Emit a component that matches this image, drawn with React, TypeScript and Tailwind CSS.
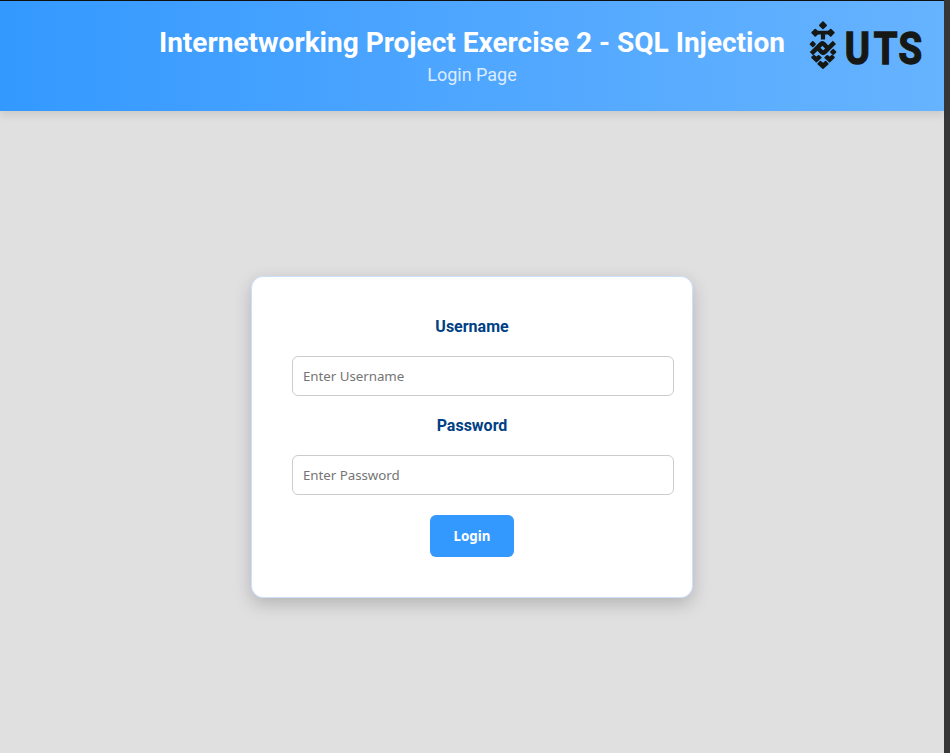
function UtsLogo() {
  return (
    <svg viewBox="0 0 114 60" className="block h-[60px] w-[114px] overflow-visible" fill="#161815" role="img" aria-label="UTS">
      <g stroke="#161815" strokeWidth="1.8" strokeLinejoin="round">
        <path d="M14 1.2l3.1 3.1L14 7.4l-3.1-3.1z" />
        <path d="M6.3 8.6l3.1 3.1-3.1 3.1-3.1-3.1zM21.7 8.6l3.1 3.1-3.1 3.1-3.1-3.1z" />
        <path d="M3.8 21l2.2 2.2-2.2 2.2-2.2-2.2zM24.2 28.8l2.2 2.2-2.2 2.2-2.2-2.2z" />
      </g>
      <path d="M6 9.8h16v3.8h-5.9V18.4h-4.2v-4.8H6z" />
      <g fill="none" stroke="#161815" strokeWidth="4.5" strokeLinejoin="round">
        <path d="M2.4 32.6L12.2 22.9Q13.4 21.9 14.6 22.9L18.2 26.5" />
        <path d="M9.6 28L13 31.3Q14.2 32.3 15.4 31.3L25.4 21.4" />
      </g>
      <g stroke="#161815" strokeWidth="1.7" strokeLinejoin="round">
        <path d="M3 36.4L5 34.6L7.4 36.6L9.8 34.8L11.8 36.6L7.4 40.6z" />
        <path d="M25 36.4L23 34.6L20.6 36.6L18.2 34.8L16.2 36.6L20.6 40.6z" />
        <path d="M9.2 42.8L11.4 40.7L14 42.9L16.6 40.7L18.8 42.8L14 47z" />
      </g>
      <text
        transform="scale(0.87 1)"
        x="41 74.4 102.8"
        y="42.6"
        fontFamily="Roboto, sans-serif"
        fontWeight="700"
        fontSize="44"
        stroke="#161815"
        strokeWidth="1.4"
      >
        UTS
      </text>
    </svg>
  );
}

function Field({ label, type, placeholder }: { label: string; type: string; placeholder: string }) {
  return (
    <label className="mb-5 block text-center">
      <span className="block h-[19px] text-base leading-[19px] font-bold text-[#004085]">{label}</span>
      <input
        type={type}
        placeholder={placeholder}
        className="mt-5 block h-10 w-[382px] rounded-[6px] border border-[#ccc] bg-white px-2.5 font-['Noto_Sans',sans-serif] text-[13.333px] tracking-[-0.04px] placeholder:text-[#757575]"
      />
    </label>
  );
}

export default function App() {
  return (
    <div className="flex h-[753px] w-[950px] overflow-hidden bg-[#383838] font-['Roboto',sans-serif]">
      <div className="flex w-[944px] flex-col border-t border-[#111] bg-[#e0e0e0]">
        <header className="relative h-[110px] shrink-0 bg-gradient-to-r from-[#3399ff] to-[#66b3ff] pt-[25px] text-center text-white shadow-[0_4px_8px_rgba(0,0,0,0.1)]">
          <h1 className="text-[28px] leading-[33px] font-bold">Internetworking Project Exercise 2 - SQL Injection</h1>
          <p className="mt-[5px] text-[18px] leading-[21px] opacity-80">Login Page</p>
          <div className="absolute top-[20px] right-[21px]">
            <UtsLogo />
          </div>
        </header>
        <main className="flex justify-center pt-[165px]">
          <form className="h-[322px] w-[442px] rounded-[12px] border border-[#cce0ff] bg-white p-10 shadow-[0_6px_18px_rgba(0,0,0,0.2)]">
            <Field label="Username" type="text" placeholder="Enter Username" />
            <Field label="Password" type="password" placeholder="Enter Password" />
            <button
              type="button"
              className="mx-auto block h-[42px] w-[84px] rounded-[6px] bg-[#3399ff] pt-[2px] font-['Noto_Sans',sans-serif] text-[13.333px] font-bold text-white"
            >
              Login
            </button>
          </form>
        </main>
      </div>
    </div>
  );
}
